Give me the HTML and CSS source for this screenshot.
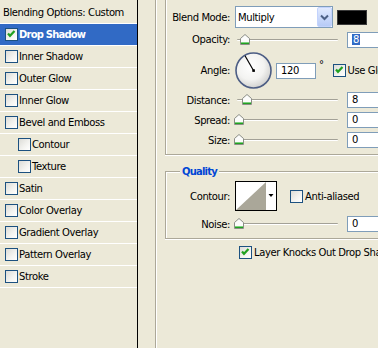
FILE: index.html
```html
<html>
<head>
    <meta charset="utf-8" />
    <title>Layer Style - Drop Shadow</title>
    <link rel="stylesheet" href="styles.css">
</head>
<body>
    <div class="dialog">
        <ul class="style-list">
            <li class="head">Blending Options: Custom</li>
            <li class="selected"><span class="check"><svg width="11" height="11" viewBox="0 0 11 11"><path d="M2 4.5L4 6.8L8.5 2" fill="none" stroke="#21A121" stroke-width="2.2"/></svg></span>Drop Shadow</li>
            <li><span class="check"></span>Inner Shadow</li>
            <li><span class="check"></span>Outer Glow</li>
            <li><span class="check"></span>Inner Glow</li>
            <li><span class="check"></span>Bevel and Emboss</li>
            <li class="sub"><span class="check"></span>Contour</li>
            <li class="sub"><span class="check"></span>Texture</li>
            <li><span class="check"></span>Satin</li>
            <li><span class="check"></span>Color Overlay</li>
            <li><span class="check"></span>Gradient Overlay</li>
            <li><span class="check"></span>Pattern Overlay</li>
            <li><span class="check"></span>Stroke</li>
        </ul>

        <div class="options">
            <div class="outer-group">
                <div class="group structure">
                    <div class="row r-blend">
                        <span class="lbl">Blend Mode:</span>
                        <div class="select">
                            <span>Multiply</span>
                            <div class="select-btn"><svg width="13" height="18" viewBox="0 0 13 18"><path d="M3 7.5L6.5 11L10 7.5" fill="none" stroke="#4D6185" stroke-width="2"/></svg></div>
                        </div>
                        <div class="swatch"></div>
                    </div>
                    <div class="row r-opacity">
                        <span class="lbl">Opacity:</span>
                        <div class="slider">
                            <div class="track"></div>
                            <svg class="thumb" style="left: 5px" width="10" height="11" viewBox="0 0 10 11"><path d="M0.5 10.5V4.5L5 0.5L9.5 4.5V10.5Z" fill="#fcfcfb" stroke="#8b8d86"/><path d="M1 8.5H9" stroke="#7fd07f"/><path d="M1 9.5H9" stroke="#21A121"/></svg>
                        </div>
                        <div class="field"><span class="sel">8</span></div>
                    </div>
                    <div class="row r-angle">
                        <span class="lbl">Angle:</span>
                        <svg class="dial" width="37" height="37" viewBox="0 0 37 37">
                            <defs>
                                <radialGradient id="dialFill" cx="42%" cy="38%" r="70%">
                                    <stop offset="0" stop-color="#ffffff"/>
                                    <stop offset="0.55" stop-color="#f3f3f1"/>
                                    <stop offset="1" stop-color="#c8c8c6"/>
                                </radialGradient>
                            </defs>
                            <circle cx="18.5" cy="18.5" r="17.5" fill="url(#dialFill)" stroke="#4c5d84" stroke-width="1.6"/>
                            <line x1="18.5" y1="18.5" x2="10" y2="3.8" stroke="#000" stroke-width="1.2"/>
                            <rect x="17.3" y="17.3" width="2.6" height="2.6" fill="#000"/>
                        </svg>
                        <div class="field">120</div>
                        <span class="deg">°</span>
                        <span class="check"><svg width="11" height="11" viewBox="0 0 11 11"><path d="M2 4.5L4 6.8L8.5 2" fill="none" stroke="#21A121" stroke-width="2.2"/></svg></span>
                        <span class="cb-label">Use Global Light</span>
                    </div>
                    <div class="row r-distance">
                        <span class="lbl">Distance:</span>
                        <div class="slider">
                            <div class="track"></div>
                            <svg class="thumb" style="left: 7px" width="10" height="11" viewBox="0 0 10 11"><path d="M0.5 10.5V4.5L5 0.5L9.5 4.5V10.5Z" fill="#fcfcfb" stroke="#8b8d86"/><path d="M1 8.5H9" stroke="#7fd07f"/><path d="M1 9.5H9" stroke="#21A121"/></svg>
                        </div>
                        <div class="field">8</div>
                    </div>
                    <div class="row r-spread">
                        <span class="lbl">Spread:</span>
                        <div class="slider">
                            <div class="track"></div>
                            <svg class="thumb" style="left: -1px" width="10" height="11" viewBox="0 0 10 11"><path d="M0.5 10.5V4.5L5 0.5L9.5 4.5V10.5Z" fill="#fcfcfb" stroke="#8b8d86"/><path d="M1 8.5H9" stroke="#7fd07f"/><path d="M1 9.5H9" stroke="#21A121"/></svg>
                        </div>
                        <div class="field">0</div>
                    </div>
                    <div class="row r-size">
                        <span class="lbl">Size:</span>
                        <div class="slider">
                            <div class="track"></div>
                            <svg class="thumb" style="left: -1px" width="10" height="11" viewBox="0 0 10 11"><path d="M0.5 10.5V4.5L5 0.5L9.5 4.5V10.5Z" fill="#fcfcfb" stroke="#8b8d86"/><path d="M1 8.5H9" stroke="#7fd07f"/><path d="M1 9.5H9" stroke="#21A121"/></svg>
                        </div>
                        <div class="field">0</div>
                    </div>
                </div>

                <div class="group quality">
                    <div class="legend">Quality</div>
                    <div class="row r-contour">
                        <span class="lbl">Contour:</span>
                        <svg class="contour" width="42" height="30" viewBox="0 0 42 30">
                            <rect x="0.5" y="0.5" width="41" height="29" fill="#fff" stroke="#000"/>
                            <path d="M1 29L31 1V29Z" fill="#aaa799"/>
                            <path d="M33.5 13H38.5L36 16Z" fill="#000"/>
                        </svg>
                        <span class="check"></span>
                        <span class="cb-label">Anti-aliased</span>
                    </div>
                    <div class="row r-noise">
                        <span class="lbl">Noise:</span>
                        <div class="slider">
                            <div class="track"></div>
                            <svg class="thumb" style="left: -1px" width="10" height="11" viewBox="0 0 10 11"><path d="M0.5 10.5V4.5L5 0.5L9.5 4.5V10.5Z" fill="#fcfcfb" stroke="#8b8d86"/><path d="M1 8.5H9" stroke="#7fd07f"/><path d="M1 9.5H9" stroke="#21A121"/></svg>
                        </div>
                        <div class="field">0</div>
                    </div>
                </div>

                <div class="knock">
                    <span class="check"><svg width="11" height="11" viewBox="0 0 11 11"><path d="M2 4.5L4 6.8L8.5 2" fill="none" stroke="#21A121" stroke-width="2.2"/></svg></span>
                    <span class="cb-label">Layer Knocks Out Drop Shadow</span>
                </div>
            </div>
        </div>
    </div>
</body>
</html>
```

FILE: styles.css
```css
html, body {
    margin: 0;
    padding: 0;
}
body {
    background-color: #ECE9D8;
    color: #000;
    font-family: "DejaVu Sans", Verdana, sans-serif;
    font-size: 10px;
    letter-spacing: -0.4px;
    overflow: hidden;
}
.dialog {
    display: flex;
    flex-direction: row;
    width: 378px;
    height: 348px;
    overflow: hidden;
}

/* left: list of effects */
.style-list {
    list-style: none;
    margin: 0;
    padding: 2px 0 0 0;
    width: 137px;
    flex: none;
    border-right: 1px solid #000;
}
.style-list > li {
    height: 21px;
    border-bottom: 1px solid #fff;
    display: flex;
    align-items: center;
    padding-left: 5px;
    white-space: nowrap;
}
.style-list > li.head {
    padding-left: 3px;
}
.style-list > li.sub {
    padding-left: 18px;
}
.style-list > li.selected {
    background-color: #316AC5;
    color: #fff;
    font-weight: bold;
    letter-spacing: -0.8px;
}
.style-list .check {
    margin-right: 1px;
}

.check {
    box-sizing: border-box;
    width: 13px;
    height: 13px;
    flex: none;
    display: inline-flex;
    align-items: center;
    justify-content: center;
    border: 1px solid #1C5180;
    background: linear-gradient(135deg, #DCDCD7 0%, #F4F4F1 60%, #fff 100%);
}

/* right: options */
.options {
    flex: 1;
    min-width: 0;
    padding-left: 17px;
    overflow: hidden;
}
.outer-group {
    height: 360px;
    border-left: 1px solid #ACA899;
    box-shadow: inset 1px 0 #fff;
    white-space: nowrap;
}
.group {
    width: 260px;
    margin-left: 9px;
    border-left: 1px solid #ACA899;
    border-bottom: 1px solid #ACA899;
}
.structure {
    padding: 6px 0 6px 0;
    box-shadow: inset 1px 0 #fff, 0 1px #fff;
}
.quality {
    margin-top: 16px;
    padding: 0 0 6px 0;
    border-top: 1px solid #ACA899;
    box-shadow: inset 1px 1px #fff, 0 1px #fff;
}
.legend {
    display: inline-block;
    margin: -7px 0 0 14px;
    padding: 0 2px;
    line-height: 13px;
    background-color: #ECE9D8;
    color: #0046D5;
    font-weight: bold;
    letter-spacing: -0.8px;
    vertical-align: top;
}

.row {
    display: flex;
    flex-direction: row;
    align-items: center;
}
.lbl {
    width: 64px;
    flex: none;
    margin-right: 5px;
    text-align: right;
}
.r-blend {
    height: 22px;
}
.r-opacity {
    height: 17px;
    margin-top: 3px;
}
.r-angle {
    height: 37px;
    margin-top: 4px;
}
.r-distance {
    height: 16px;
    margin-top: 3px;
}
.r-spread, .r-size {
    height: 16px;
    margin-top: 4px;
}
.r-contour {
    height: 30px;
    margin-top: 3px;
}
.r-noise {
    height: 16px;
    margin-top: 5px;
}

.select {
    box-sizing: border-box;
    width: 98px;
    height: 22px;
    margin-right: 4px;
    border: 1px solid #7F9DB9;
    background-color: #fff;
    display: flex;
    align-items: center;
    padding-left: 2px;
}
.select > span {
    flex: 1;
}
.select-btn {
    box-sizing: border-box;
    width: 15px;
    height: 20px;
    border: 1px solid #C3D3FD;
    border-radius: 2px;
    background: linear-gradient(#E1EAFE, #B7CBF7);
    display: flex;
    align-items: center;
    justify-content: center;
}
.swatch {
    box-sizing: border-box;
    width: 30px;
    height: 15px;
    background-color: #000;
    border: 1px solid #3a3a3a;
}

.slider {
    position: relative;
    width: 105px;
    height: 16px;
    margin-right: 7px;
    flex: none;
}
.track {
    margin: 7px 2px 0 2px;
    height: 0;
    border-top: 1px solid #A3A197;
    border-bottom: 1px solid #fff;
    border-radius: 1px;
}
.thumb {
    position: absolute;
    top: 2px;
}

.field {
    box-sizing: border-box;
    width: 40px;
    height: 16px;
    flex: none;
    border: 1px solid #7F9DB9;
    background-color: #fff;
    padding-left: 4px;
    line-height: 14px;
}
.field .sel {
    background-color: #316AC5;
    color: #fff;
    padding: 0 1px;
}

.dial {
    margin-right: 4px;
    flex: none;
}
.deg {
    align-self: flex-start;
    margin: 8px 9px 0 3px;
    line-height: 10px;
}
.cb-label {
    margin-left: 2px;
}
.contour {
    flex: none;
    margin-right: 13px;
}

.knock {
    display: flex;
    align-items: center;
    margin: 7px 0 0 83px;
    height: 13px;
}
```
